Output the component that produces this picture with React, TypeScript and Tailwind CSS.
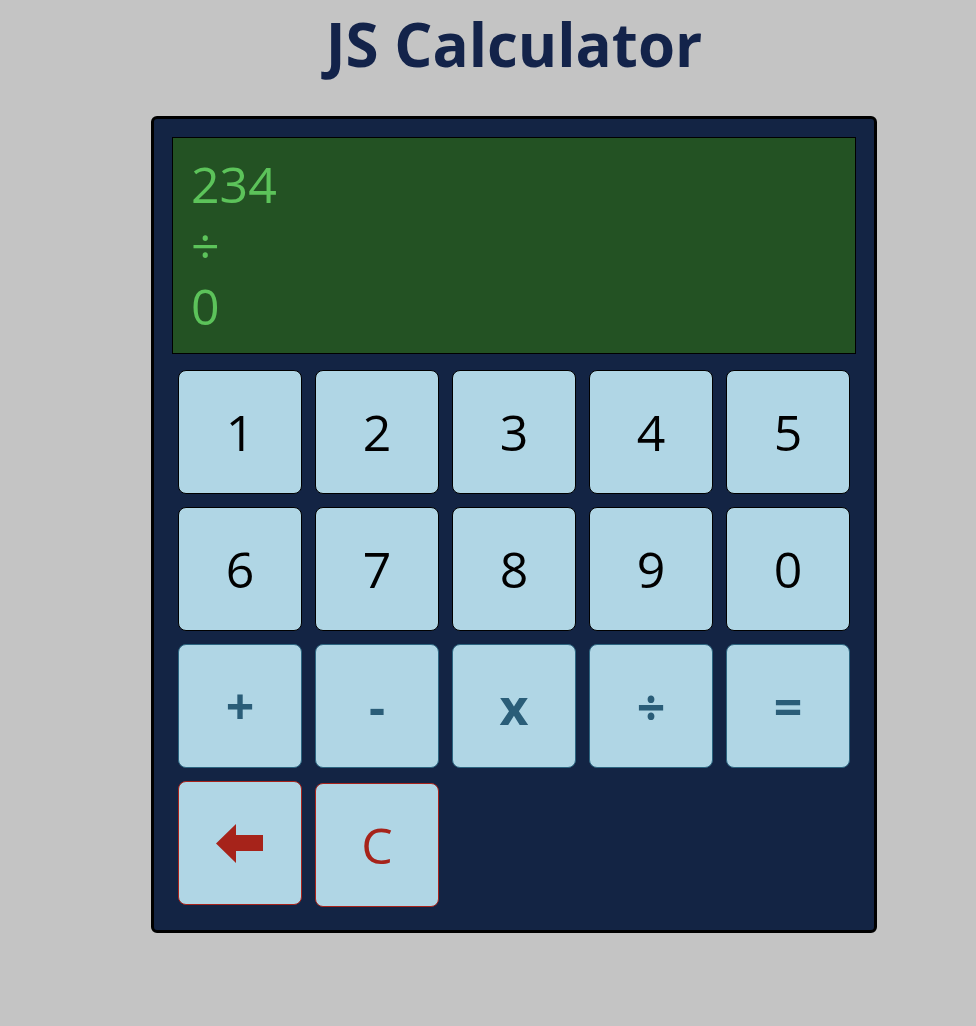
const digits = ['1', '2', '3', '4', '5', '6', '7', '8', '9', '0'];
const operators = ['+', '-', 'x', '÷', '='];

function Key({ label, kind }: { label: React.ReactNode; kind: 'digit' | 'op' | 'clear' }) {
  const tone =
    kind === 'digit'
      ? 'border-black text-black font-medium'
      : kind === 'op'
        ? 'border-[#2c6580] text-[#2a5d78] font-bold'
        : 'border-[#a8231b] text-[#a6231a] font-medium';
  return (
    <button
      className={`w-[124px] h-[124px] rounded-[8px] border bg-[#b0d6e5] flex items-center justify-center text-[50px] leading-none ${tone}`}
    >
      {label}
    </button>
  );
}

function BackArrow() {
  return (
    <svg width="48" height="39" viewBox="0 0 48 39">
      <polygon points="0,19.5 20,0 20,11 47,11 47,27 20,27 20,39" fill="#a6231a" />
    </svg>
  );
}

export default function App() {
  return (
    <div
      className="min-h-screen bg-[#c4c4c4] pl-[52px] flex flex-col items-center"
      style={{ fontFamily: '"Open Sans", "DejaVu Sans", sans-serif' }}
    >
      <h1 className="mt-[10px] text-[60px] leading-[68px] font-bold text-[#13234a]">JS Calculator</h1>

      <div className="mt-[38px] w-[726px] rounded-[6px] border-[3px] border-black bg-[#132444] pt-[18px] pb-[23px] flex flex-col items-center">
        <div className="w-[684px] h-[217px] border border-black bg-[#235223] px-[18px] py-[16px] text-[#5cc35a] text-[50px] leading-[61px] font-medium">
          <div>234</div>
          <div>÷</div>
          <div>0</div>
        </div>

        <div className="mt-[16px] grid grid-cols-[repeat(5,124px)] gap-[13px] items-start">
          {digits.map((d) => (
            <Key key={d} label={d} kind="digit" />
          ))}
          {operators.map((o) => (
            <Key key={o} label={o} kind="op" />
          ))}
          <Key label={<BackArrow />} kind="clear" />
          <div className="mt-[2px]">
            <Key label="C" kind="clear" />
          </div>
        </div>
      </div>
    </div>
  );
}
